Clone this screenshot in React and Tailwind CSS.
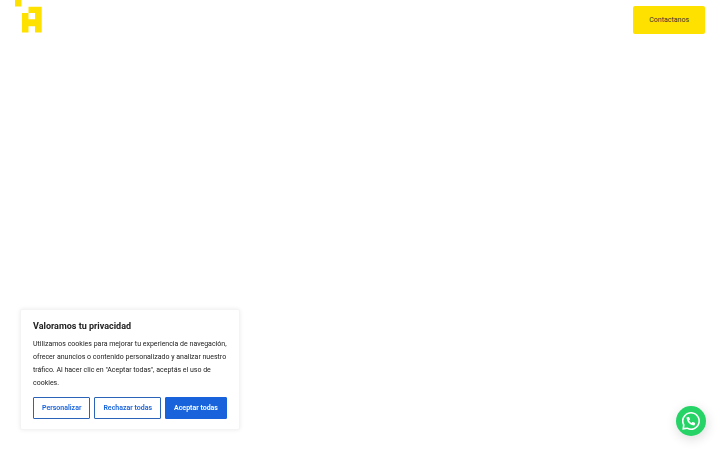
import { useState } from 'react'

function Logo() {
  return (
    <svg viewBox="0 0 27 33" className="w-[27px] h-[33px]" fill="#ffe100" aria-hidden="true">
      <rect x="0" y="0" width="6.5" height="6.5" />
      <path
        fillRule="evenodd"
        d="M13.5 6.8H26.7V32.5H20V26.2H13.5V32.5H7V13H13.5ZM13.5 13V19.2H20V13Z"
      />
    </svg>
  )
}

function Header() {
  return (
    <header className="flex items-start justify-between px-[15px]">
      <a href="#inicio" aria-label="Inicio">
        <Logo />
      </a>
      <a
        href="#contacto"
        className="mt-[6px] px-4 py-2 rounded-xs bg-[#ffe100] text-[#333] text-[7px] leading-3"
      >
        Contactanos
      </a>
    </header>
  )
}

function CookieBanner({ onClose }) {
  const button = 'h-[22px] px-2 rounded-[1px] border text-[7px] font-semibold whitespace-nowrap'
  const outline = `${button} border-[#2a63b8] bg-white text-[#1863dc]`

  return (
    <section
      aria-labelledby="cookie-title"
      className="fixed bottom-5 left-5 w-[220px] px-3 py-[10px] rounded-xs border border-[#f4f4f4] bg-white text-[#212121] shadow-[0_0_4px_rgba(0,0,0,0.08)]"
    >
      <h2 id="cookie-title" className="text-[9px] leading-3 font-bold">
        Valoramos tu privacidad
      </h2>
      <p className="mt-[6px] text-[7px] leading-[13px]">
        Utilizamos cookies para mejorar tu experiencia de navegación, ofrecer anuncios o contenido
        personalizado y analizar nuestro tráfico. Al hacer clic en "Aceptar todas", aceptás el uso de
        cookies.
      </p>
      <div className="flex gap-1 mt-[7px]">
        <button type="button" onClick={onClose} className={outline}>
          Personalizar
        </button>
        <button type="button" onClick={onClose} className={outline}>
          Rechazar todas
        </button>
        <button type="button" onClick={onClose} className={`${button} border-[#1863dc] bg-[#1863dc] text-white`}>
          Aceptar todas
        </button>
      </div>
    </section>
  )
}

function WhatsAppButton() {
  return (
    <button
      type="button"
      aria-label="WhatsApp"
      className="fixed bottom-[14px] right-[14px] flex items-center justify-center size-[30px] rounded-full bg-[#25d366] shadow-[1px_3px_12px_rgba(0,0,0,0.15)]"
    >
      <svg viewBox="0 0 24 24" className="size-[18px]" fill="#fff" aria-hidden="true">
        <path d="M3.516 3.516c4.686-4.686 12.284-4.686 16.97 0s4.686 12.283 0 16.97a12 12 0 0 1-13.754 2.299l-5.814.735a.392.392 0 0 1-.438-.44l.748-5.788A12 12 0 0 1 3.517 3.517zm3.61 17.043.3.158a9.85 9.85 0 0 0 11.534-1.758c3.843-3.843 3.843-10.074 0-13.918s-10.075-3.843-13.918 0a9.85 9.85 0 0 0-1.747 11.554l.16.303-.51 3.942a.196.196 0 0 0 .219.22zm6.534-7.003-.933 1.164a9.84 9.84 0 0 1-3.497-3.495l1.166-.933a.79.79 0 0 0 .23-.94L9.561 6.96a.79.79 0 0 0-.924-.445l-2.023.524a.797.797 0 0 0-.588.88 11.754 11.754 0 0 0 10.005 10.005.797.797 0 0 0 .88-.587l.525-2.023a.79.79 0 0 0-.445-.923L14.6 13.327a.79.79 0 0 0-.94.23z" />
      </svg>
    </button>
  )
}

export default function App() {
  const [showCookies, setShowCookies] = useState(true)

  return (
    <div className="min-h-screen bg-white font-['Roboto',sans-serif]">
      <Header />
      {showCookies && <CookieBanner onClose={() => setShowCookies(false)} />}
      <WhatsAppButton />
    </div>
  )
}
